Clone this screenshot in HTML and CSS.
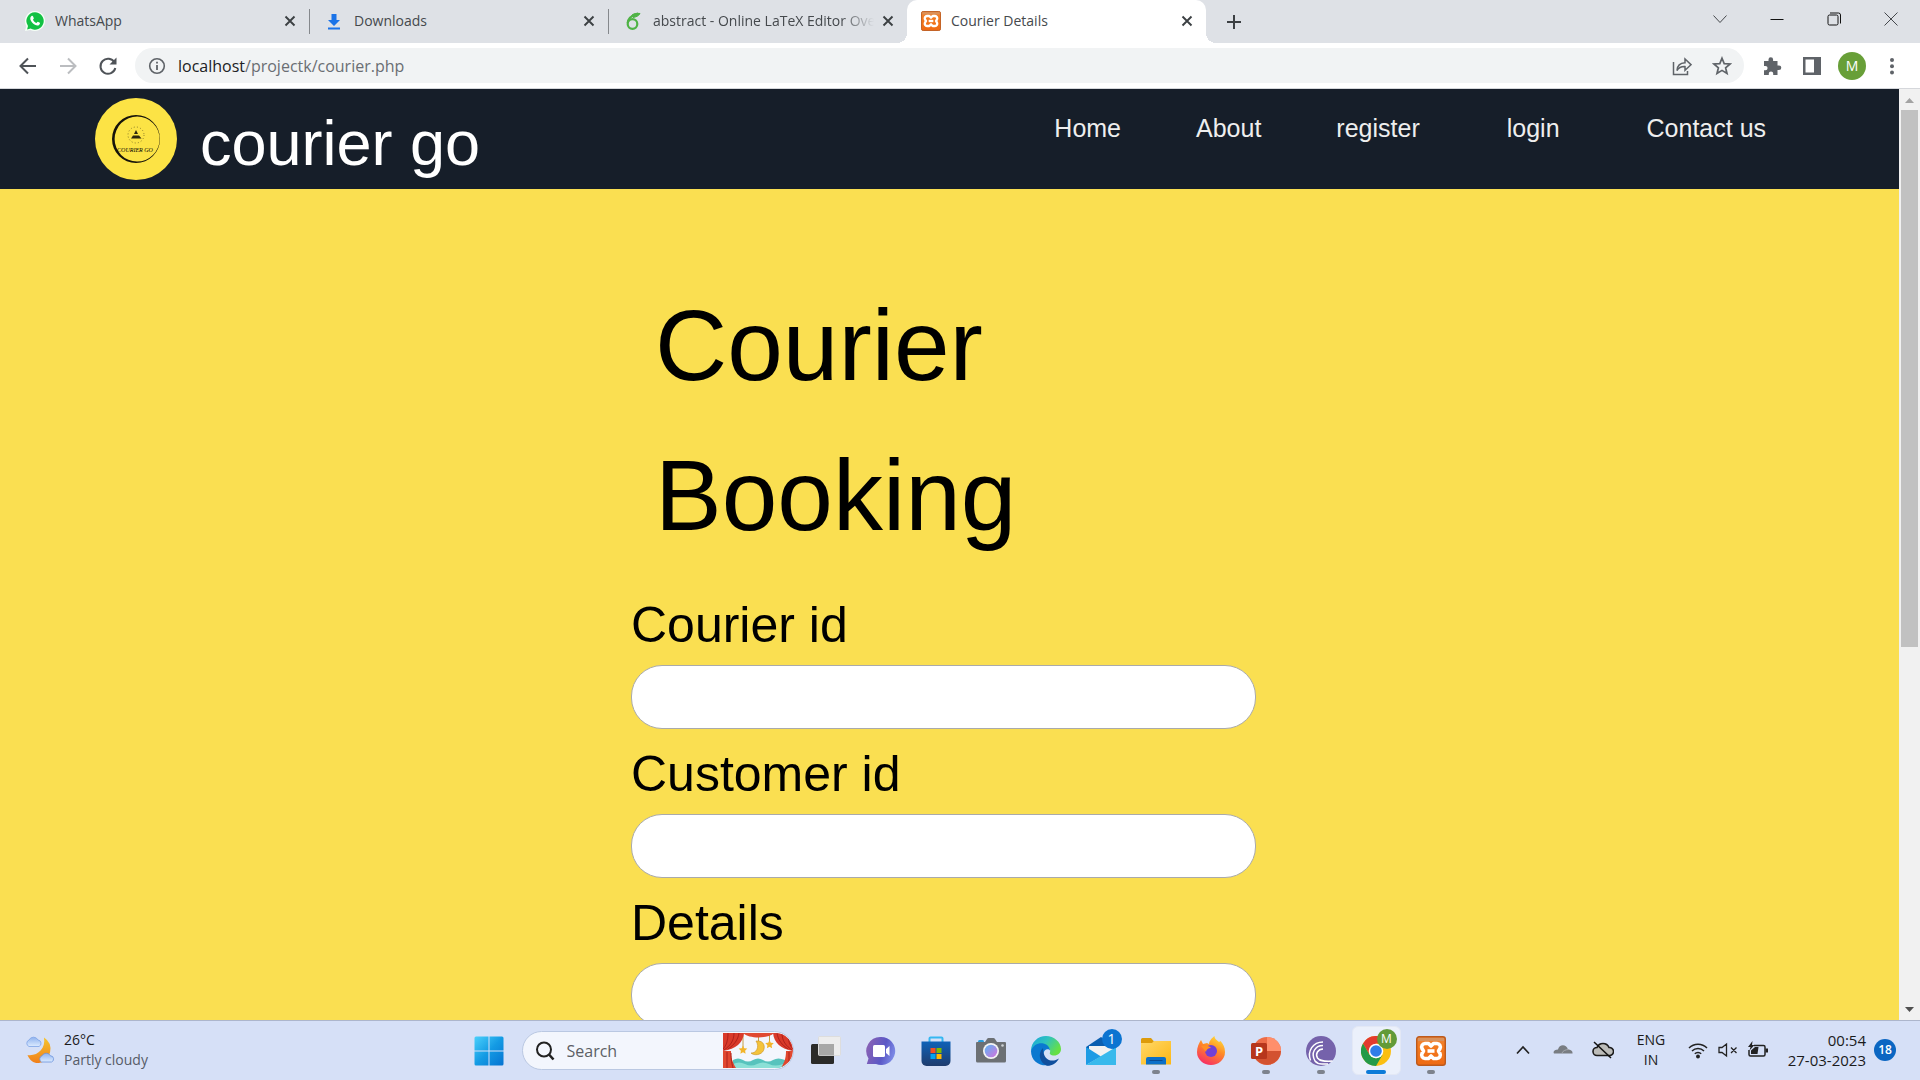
FILE: index.html
```html
<!DOCTYPE html>
<html lang="en">
<head>
<meta charset="utf-8">
<meta name="viewport" content="width=device-width, initial-scale=1">
<title>Courier Details</title>
<link rel="stylesheet" href="styles.css">
</head>
<body>
<svg class="defs" aria-hidden="true">
  <defs>
    <linearGradient id="orange" x1="0" y1="0" x2="0" y2="1"><stop offset="0" stop-color="#e9863f"/><stop offset=".3" stop-color="#f47b20"/><stop offset="1" stop-color="#ee6a14"/></linearGradient>
    <symbol id="xampp" viewBox="0 0 30 30">
      <rect x=".7" y=".7" width="28.6" height="28.6" rx="2.5" fill="url(#orange)" stroke="#bd5a1c" stroke-width="1.4"/>
      <path d="M2 2h26v3H2z" fill="#d9925c"/>
      <path d="M9 7.5h3.5L15 10l2.500-2.500H21a3.500 3.500 0 0 1 3 5l-1.500 2.500 1.500 2.500a3.500 3.500 0 0 1-3 5h-3.500L15 20l-2.500 2.500H9a3.500 3.500 0 0 1-3-5L7.500 15 6 12.500a3.500 3.500 0 0 1 3-5z" fill="none" stroke="#fff" stroke-width="3.600" stroke-linejoin="round"/>
      <path d="M11.500 15h7" stroke="#fff" stroke-width="3.600"/>
    </symbol>
    <symbol id="close" viewBox="0 0 12 12"><path d="M1.500 1.500l9 9M10.500 1.500l-9 9" stroke="#3c4043" stroke-width="1.900"/></symbol>
  </defs>
</svg>

<header class="browser">
  <div class="tabstrip">
    <nav class="tabs" aria-label="Tabs">
      <div class="tab">
        <svg class="favicon" viewBox="0 0 20 20"><path d="M10 0a10 10 0 1 1-4.500 18.900L0 20l1.300-5A10 10 0 0 1 10 0z" fill="#f5fff6"/><path d="M10 1.300a8.700 8.700 0 1 1-4.400 16.200l-3.500.9.900-3.400A8.700 8.700 0 0 1 10 1.300z" fill="#12c143"/><path d="M6.300 5.300c.7-.7 1.500-.5 1.800.2l.7 1.700c.1.500-.8 1.200-.8 1.500.6 1.500 2 2.700 3.400 3.200.5 0 1-1.200 1.500-1.100l1.900 1c.6.500-.1 2.200-1.400 2.600-3.200 1-8.500-3.900-8.100-7.300.1-.7.500-1.400 1-1.800z" fill="#fff"/></svg>
        <span class="tab-title">WhatsApp</span>
        <button class="tab-close" aria-label="Close WhatsApp"><svg width="12" height="12"><use href="#close"/></svg></button>
      </div>
      <div class="tab tab-divided">
        <svg class="favicon" viewBox="0 0 20 20"><path d="M7.500 3h5v6H16l-6 6-6-6h3.500zM4 16.500h12v2H4z" fill="#1a73e8"/></svg>
        <span class="tab-title">Downloads</span>
        <button class="tab-close" aria-label="Close Downloads"><svg width="12" height="12"><use href="#close"/></svg></button>
      </div>
      <div class="tab tab-divided">
        <svg class="favicon" viewBox="0 0 20 20" fill="none" stroke="#4fb345"><circle cx="9.500" cy="13" r="4.800" stroke-width="2.200"/><path d="M4.700 12C5 7.500 8 4.500 15 2.500" stroke-width="2.200"/><path d="M8.500 4.500c2-2 5-2.500 8.500-2-1.200 2.500-4 3.500-7 4" stroke-width="1" fill="#4fb345"/></svg>
        <span class="tab-title tab-fade">abstract - Online LaTeX Editor Overleaf</span>
        <button class="tab-close" aria-label="Close abstract"><svg width="12" height="12"><use href="#close"/></svg></button>
      </div>
      <div class="tab tab-active">
        <svg class="favicon"><use href="#xampp"/></svg>
        <span class="tab-title">Courier Details</span>
        <button class="tab-close" aria-label="Close Courier Details"><svg width="12" height="12"><use href="#close"/></svg></button>
      </div>
      <button class="new-tab" aria-label="New tab"><svg width="16" height="16" viewBox="0 0 16 16"><path d="M8 1v14M1 8h14" stroke="#3c4043" stroke-width="2"/></svg></button>
    </nav>
    <div class="window-buttons">
      <button aria-label="Search tabs"><svg width="14" height="14" viewBox="0 0 14 14"><path d="M.5 3.500L7 10.500l6.500-7"/></svg></button>
      <button aria-label="Minimize"><svg width="14" height="14" viewBox="0 0 14 14"><path d="M.5 7.500h13" stroke="#111"/></svg></button>
      <button aria-label="Restore"><svg width="14" height="14" viewBox="0 0 14 14"><rect x="1" y="3" width="10" height="10" rx="1.500" stroke="#111"/><path d="M3 1h8.500a2 2 0 0 1 2 2v8.500" stroke="#111"/></svg></button>
      <button aria-label="Close window"><svg width="14" height="14" viewBox="0 0 14 14"><path d="M.5.5l13 13M13.500.5l-13 13"/></svg></button>
    </div>
  </div>

  <div class="toolbar">
    <div class="nav-buttons">
      <button aria-label="Back"><svg width="20" height="20" viewBox="0 0 20 20"><path d="M18 10H3M10 2.500L2.500 10l7.500 7.500"/></svg></button>
      <button aria-label="Forward" disabled><svg width="20" height="20" viewBox="0 0 20 20"><path d="M2 10h15M10 2.500l7.500 7.500-7.500 7.500"/></svg></button>
      <button aria-label="Reload"><svg width="20" height="20" viewBox="0 0 20 20"><path d="M16.500 6.500A7.500 7.500 0 1 0 17.300 12"/><path d="M18.500 1.500v7h-7z" fill="#4f5358" stroke="none"/></svg></button>
    </div>
    <div class="omnibox">
      <svg width="18" height="18" viewBox="0 0 18 18"><circle cx="9" cy="9" r="7.300" fill="none" stroke="#5f6368" stroke-width="1.600"/><path d="M9 8v5M9 4.800v1.800" stroke="#5f6368" stroke-width="1.800"/></svg>
      <div class="url" role="textbox" aria-label="Address" contenteditable="true" spellcheck="false"><span class="url-host">localhost</span>/projectk/courier.php</div>
      <button aria-label="Share"><svg width="20" height="20" viewBox="0 0 20 20" fill="none" stroke="#5f6368" stroke-width="1.500"><path d="M1.500 6v12.500h14V15M5 14.500c.3-5 3-7.500 8-7.700V3l6 5.700-6 5.500v-3.600c-4-.2-6.300 1-8 3.900z"/></svg></button>
      <button aria-label="Bookmark this page"><svg width="20" height="20" viewBox="0 0 20 20"><path d="M10 2.200l2.200 5.400 5.900.4-4.500 3.800 1.400 5.700-5-3.100-5 3.100 1.400-5.700L1.900 8l5.900-.4z" fill="none" stroke="#5f6368" stroke-width="1.700"/></svg></button>
    </div>
    <div class="toolbar-actions">
      <button aria-label="Extensions"><svg width="20" height="20" viewBox="0 0 20 20"><path d="M2 5h4.500V3.500a2.300 2.300 0 0 1 4.600 0V5H15.500v4.500H17a2.300 2.300 0 0 1 0 4.600h-1.500V19h-4.300v-1.400a2.200 2.200 0 0 0-4.400 0V19H2v-4.700h1.400a2.200 2.200 0 0 0 0-4.400H2z" fill="#5f6368"/></svg></button>
      <button aria-label="Side panel"><svg width="20" height="20" viewBox="0 0 20 20"><path d="M1 1h18v18H1zM3.500 3.500v13h8.500v-13z" fill="#5f6368" fill-rule="evenodd"/></svg></button>
      <button class="profile" aria-label="Profile">M</button>
      <button aria-label="Menu"><svg width="20" height="20" viewBox="0 0 20 20" fill="#5f6368"><circle cx="10" cy="4" r="2"/><circle cx="10" cy="10.200" r="2"/><circle cx="10" cy="16.400" r="2"/></svg></button>
    </div>
  </div>
</header>

<div class="viewport">
  <div class="site">
    <header class="site-header">
      <a class="brand" href="#">
        <svg class="brand-logo" viewBox="0 0 82 82">
          <circle cx="41" cy="41" r="41" fill="#fce345"/>
          <path d="M41 17a24 24 0 1 0 24 24A24 24 0 0 0 41 17zm1.200 1.600A22.500 22.500 0 1 1 42 63.600 22.500 22.500 0 0 1 42.200 18.600z" fill="#16130a" fill-rule="evenodd"/>
          <circle cx="41" cy="37" r="8" fill="none" stroke="#8a7b2a" stroke-dasharray="1 2.200"/>
          <path d="M36 40.500l2-3h6l2.500 3zM39 36l2-4 2 4z" fill="#2d270d"/>
          <text x="40" y="54" text-anchor="middle" class="brand-logo-text">COURIER GO</text>
        </svg>
        <span>courier go</span>
      </a>
      <nav class="site-nav" aria-label="Main">
        <a href="#">Home</a>
        <a href="#">About</a>
        <a href="#">register</a>
        <a href="#" class="nav-login">login</a>
        <a href="#">Contact us</a>
      </nav>
    </header>
    <main class="booking">
      <form class="booking-form">
        <h1>Courier Booking</h1>
        <div class="field"><label for="courier-id">Courier id</label><input id="courier-id" type="text"></div>
        <div class="field"><label for="customer-id">Customer id</label><input id="customer-id" type="text"></div>
        <div class="field"><label for="details">Details</label><input id="details" type="text"></div>
      </form>
    </main>
  </div>
  <div class="scrollbar" aria-hidden="true">
    <svg width="20" height="21" viewBox="0 0 20 21"><path d="M6 14l4.500-5 4.500 5z" fill="#a3a3a3"/></svg>
    <div class="scroll-track"><div class="scroll-thumb"></div></div>
    <svg width="20" height="21" viewBox="0 0 20 21"><path d="M6 8h9l-4.500 5z" fill="#505050"/></svg>
  </div>
</div>

<footer class="taskbar">
  <button class="weather">
    <svg width="30" height="30" viewBox="0 0 30 30">
      <defs><linearGradient id="moon" x1="0" y1="0" x2="0" y2="1"><stop offset="0" stop-color="#f6c52d"/><stop offset="1" stop-color="#f07f1b"/></linearGradient><linearGradient id="cloud" x1="0" y1="0" x2="0" y2="1"><stop offset="0" stop-color="#8fb2ee"/><stop offset="1" stop-color="#dcebff"/></linearGradient></defs>
      <path d="M19 2.500a14 14 0 0 1-5 25.500C9 28.500 5 26 2.500 20 12 21.500 21 14 19 2.500z" fill="url(#moon)"/>
      <path d="M4 11.500a3.500 3.500 0 0 1 0-6.500 5 5 0 0 1 9 0 3.400 3.400 0 0 1 1 6.500z" fill="url(#cloud)" stroke="#7ea3e6" stroke-width=".8"/>
      <path d="M16.500 27a3.400 3.400 0 0 1 .5-6.200 4.800 4.800 0 0 1 8.500 0 3.200 3.200 0 0 1 1 6.200z" fill="url(#cloud)" stroke="#6b93dc" stroke-width=".8"/>
    </svg>
    <span class="weather-text"><span>26°C</span><span class="muted">Partly cloudy</span></span>
  </button>

  <div class="task-center">
    <button class="task" aria-label="Start"><svg viewBox="0 0 30 30"><defs><linearGradient id="win" x1="0" y1="0" x2="1" y2="1"><stop offset="0" stop-color="#4bd0fb"/><stop offset=".5" stop-color="#149be4"/><stop offset="1" stop-color="#0573d1"/></linearGradient></defs><path d="M2 .5h12.500v14H.5V2A1.500 1.500 0 0 1 2 .5zM15.500.5H28A1.500 1.500 0 0 1 29.500 2v12.500h-14zM.5 15.500h14v14H2A1.500 1.500 0 0 1 .5 28zM15.500 15.500h14V28a1.500 1.500 0 0 1-1.500 1.500H15.500z" fill="url(#win)"/></svg></button>
    <div class="search">
      <svg width="20" height="20" viewBox="0 0 20 20" fill="none" stroke="#222"><circle cx="9" cy="8.500" r="7" stroke-width="2"/><path d="M14 13.500l4.500 5" stroke-width="2.600"/></svg>
      <input type="search" placeholder="Search" aria-label="Search">
      <svg class="search-art" viewBox="0 0 70 35">
        <path d="M10 27q5-3 10 0t10 0 10 0 10 0 12 0v8H10z" fill="#57c3bd"/><path d="M10 31q6-3 12 0t12 0 12 0 14 0v4H10z" fill="#8be0d6"/>
        <path d="M20 0v14M35.500 0v8M46.500 0v9" stroke="#b98b1b" stroke-width=".8"/>
        <path d="M35 8c5.500 0 7.500 5 5.500 9.500S31 23 28 20c5 .5 9-6 5-12z" fill="#f4c33b" stroke="#c9911f" stroke-width=".6"/>
        <path d="M20 12.500l1.300 2.700 3 .4-2.200 2.100.5 3-2.600-1.400-2.600 1.400.5-3-2.200-2.100 3-.4zM46.500 7l1.300 2.700 3 .4-2.200 2.100.5 3-2.600-1.400-2.600 1.400.5-3-2.200-2.100 3-.4z" fill="#f2b52c"/>
        <path d="M0 0h21c-1 10-8 16-21 18zM70 0H50c1 10 8 16 20 18z" fill="#d93a2a"/>
        <path d="M20 0h31c-6 6-25 6-31 0z" fill="#e04a32"/>
        <path d="M0 18h8c0 8 2 12 5 17H0zM70 18h-7c0 8-2 12-5 17h12z" fill="#e0472f"/>
        <path d="M5 0c0 8-2 13-5 16M11 0c0 8-4 13-10 17M16 0c-1 7-5 12-11 16M65 0c0 8 2 13 5 16M59 0c0 8 4 13 10 17M54 0c1 7 5 12 11 16M4 19v16M8 20c0 7 1 11 2 15M66 19v16" fill="none" stroke="#a91e1a" stroke-width=".9"/>
      </svg>
    </div>
    <button class="task" aria-label="Task view"><svg viewBox="0 0 30 30"><rect y="8" width="23" height="20" rx="1.500" fill="#2b2b29"/><rect x="7.500" y=".5" width="22" height="19" rx="1" fill="#ededed" stroke="#ddd"/><path d="M8 8h15v11.500H8z" fill="#a8a8a7"/></svg></button>
    <button class="task" aria-label="Chat"><svg viewBox="0 0 30 30"><defs><linearGradient id="chat" x1="0" y1=".3" x2="1" y2=".6"><stop offset="0" stop-color="#8a62b4"/><stop offset=".6" stop-color="#5b58c6"/><stop offset="1" stop-color="#7e8de8"/></linearGradient></defs><path d="M15 1a14 14 0 1 1-5 27H.8l1.700-5.500A14 14 0 0 1 15 1z" fill="url(#chat)"/><rect x="7" y="9" width="12" height="12" rx="1.500" fill="#fff"/><path d="M20 13l3.500-3v10L20 17z" fill="#fff"/></svg></button>
    <button class="task" aria-label="Microsoft Store"><svg viewBox="0 0 30 30"><defs><linearGradient id="store" x1="0" y1="0" x2="0" y2="1"><stop offset="0" stop-color="#0f62b8"/><stop offset="1" stop-color="#1f3c6d"/></linearGradient></defs><path d="M8.500 7V2.500a1 1 0 0 1 1-1h11a1 1 0 0 1 1 1V7" fill="none" stroke="#35b7f1" stroke-width="2"/><path d="M.5 5.500h29V25a5 5 0 0 1-5 5h-19a5 5 0 0 1-5-5z" fill="url(#store)"/><path d="M9.500 12h5v5h-5z" fill="#f25022"/><path d="M15.500 12h5v5h-5z" fill="#7fba00"/><path d="M9.500 18h5v5h-5z" fill="#00a4ef"/><path d="M15.500 18h5v5h-5z" fill="#ffb900"/></svg></button>
    <button class="task" aria-label="Camera"><svg viewBox="0 0 30 30"><defs><linearGradient id="lens" x1="0" y1="0" x2="1" y2="1"><stop offset="0" stop-color="#5bb5f5"/><stop offset="1" stop-color="#d573dc"/></linearGradient></defs><path d="M2 7V5.500A1.500 1.500 0 0 1 3.500 4h3A1.500 1.500 0 0 1 8 5.500V7z" fill="#2a9cdc"/><path d="M0 7a1 1 0 0 1 1-1h8l2-3a2 2 0 0 1 1.500-1h5A2 2 0 0 1 19 3l2 3h8a1 1 0 0 1 1 1v18a1.500 1.500 0 0 1-1.500 1.500h-27A1.500 1.500 0 0 1 0 25z" fill="#6c7074"/><circle cx="15" cy="15" r="8" fill="#f4f4f4"/><circle cx="15" cy="15" r="6.300" fill="url(#lens)"/><circle cx="26.500" cy="9.500" r="1.300" fill="#cfd3d6"/></svg></button>
    <button class="task" aria-label="Edge"><svg viewBox="0 0 30 30"><defs><linearGradient id="edgetop" x1="0" y1="0" x2="1" y2=".5"><stop offset="0" stop-color="#17a4dc"/><stop offset=".5" stop-color="#2fc2bf"/><stop offset="1" stop-color="#66e045"/></linearGradient></defs><path d="M0 15C0 6 7 0 15 0s15 6 15 13c0 4-3 6.500-7 6.500-3 0-5-1.500-4-3C21 10 10 6 0 15z" fill="url(#edgetop)"/><path d="M0 15C2 8.500 8 6.500 12.500 7.500c4 1 6.500 4 6.500 7-1.500-2.500-6.500-1.500-6.500 3.500 0 6 6 9.500 12 8C16 33 0 29 0 15z" fill="#0b78d0"/><path d="M12 12c-6 6-3 15 4 17.800 5 .2 9-2.300 12-7.300-6 4-16 3-16-10.500z" fill="#104f9d"/></svg></button>
    <button class="task" aria-label="Mail, 1 new"><svg viewBox="0 0 30 30"><path d="M0 11L15 1l15 10v8H0z" fill="#0b5fb0"/><path d="M3 10h24v9L15 22 3 16z" fill="#f2f2f2"/><path d="M0 11l15 9.500L0 29z" fill="#1d9be4"/><path d="M30 11L0 29h30z" fill="#38b9ec"/></svg><span class="badge">1</span></button>
    <button class="task task-running" aria-label="File Explorer"><svg viewBox="0 0 30 30"><defs><linearGradient id="folder" x1="0" y1="0" x2="1" y2="1"><stop offset="0" stop-color="#ffd869"/><stop offset="1" stop-color="#fdb713"/></linearGradient></defs><path d="M0 3.500A1.500 1.500 0 0 1 1.500 2H10l3 3.500V9H0z" fill="#dd9b0b"/><path d="M0 7h11l2-2h17v23.500H0z" fill="url(#folder)"/><path d="M5 28.500V23a2 2 0 0 1 2-2h16a2 2 0 0 1 2 2v5.500z" fill="#0c70c8"/><path d="M8.500 24.500h13" stroke="#0a4b92"/></svg></button>
    <button class="task" aria-label="Firefox"><svg viewBox="0 0 30 30"><defs><linearGradient id="fox" x1=".8" y1="0" x2=".3" y2="1"><stop offset="0" stop-color="#ffe23b"/><stop offset=".45" stop-color="#ff8a26"/><stop offset="1" stop-color="#f72c66"/></linearGradient></defs><path d="M1 16C1 11 3 7 5 4l2 4 4-1 2 1c0-3 3-6 5.500-8 0 3 2.500 4 4.500 6l1.500-1C27 8 29 11 29 16a14 13 0 0 1-28 0z" fill="url(#fox)"/><circle cx="15" cy="15" r="6" fill="#7140d6"/><path d="M5 10c4-1.500 9 0 10 2-3 0-5 2-5 4" fill="#ff8f25"/></svg></button>
    <button class="task task-running" aria-label="PowerPoint"><svg viewBox="0 0 30 30"><circle cx="16" cy="15" r="14" fill="#ed6c47"/><path d="M16 1a14 14 0 0 1 14 14H16z" fill="#ff8f6b"/><path d="M30 15a14 14 0 0 1-27 5l13-5z" fill="#d35230"/><rect y="7" width="16" height="16" rx="1.500" fill="#b7361c"/><text x="8" y="19.500" text-anchor="middle" class="ppt-letter">P</text></svg></button>
    <button class="task task-running" aria-label="BitTorrent"><svg viewBox="0 0 30 30"><circle cx="15" cy="15" r="15" fill="#7562ab"/><g fill="none" stroke="#fff" stroke-width="1.500"><path d="M17 6C7 6 1 15 4.500 24.500"/><path d="M17 9.500C9 9.500 4.500 17 9 25q2.500 3 7 3h6"/><path d="M17 13c-5 0-8 5-5.500 9 2.500 3.500 7.500 3.500 15 3"/></g></svg></button>
    <button class="task task-running task-active" aria-label="Chrome"><svg viewBox="0 0 30 30"><circle cx="15" cy="15" r="15" fill="#fbbf12"/><path d="M2 7.500A15 15 0 0 1 28 7.500H15L8.500 18.800z" fill="#e33b2e"/><path d="M2 7.500l6.500 11.300L15 22.500l6.500-3.700L15 30A15 15 0 0 1 2 7.500z" fill="#249a48"/><circle cx="15" cy="15" r="7.300" fill="#fff"/><circle cx="15" cy="15" r="5.800" fill="#2f7de9"/></svg><span class="badge badge-green">M</span></button>
    <button class="task task-running" aria-label="XAMPP"><svg><use href="#xampp"/></svg></button>
  </div>

  <div class="tray">
    <button aria-label="Show hidden icons"><svg width="14" height="10" viewBox="0 0 14 10"><path d="M1 8.500l6-6.500 6 6.500" fill="none" stroke="#222" stroke-width="1.700"/></svg></button>
    <button aria-label="OneDrive"><svg width="20" height="20" viewBox="0 0 20 20"><path d="M1 13.500c-1.500-2 1-4 4-4 1-5 8-6 10 0 3 0 5 2 4.500 4z" fill="#797d82"/><path d="M9 13c1-2.500 4-3.500 7-3.500" stroke="#a5a8ad" fill="none"/></svg></button>
    <button aria-label="Sync paused"><svg width="22" height="20" viewBox="0 0 22 20"><path d="M5 15.500a4 4 0 0 1 0-8 6.500 6.500 0 0 1 12 0 4 4 0 0 1 1 8z" fill="#bcbcb9" stroke="#1a1a1a" stroke-width="1.600"/><path d="M2 2l17 16" stroke="#111" stroke-width="1.500"/></svg></button>
    <button class="language"><span>ENG</span><span>IN</span></button>
    <button class="status" aria-label="Network, sound and battery">
      <svg width="20" height="18" viewBox="0 0 20 18" fill="none" stroke="#222" stroke-width="1.500"><path d="M1 7a12.500 12.500 0 0 1 18 0M4 10a8.500 8.500 0 0 1 12 0M6.800 12.800a4.500 4.500 0 0 1 6.400 0"/><circle cx="10" cy="15.500" r="1.200" fill="#222"/></svg>
      <svg width="20" height="18" viewBox="0 0 20 18" fill="none" stroke="#222" stroke-width="1.300"><path d="M1 6.500h3L8.500 3v12L4 11.500H1zM13 6.500l5.500 5.500M18.500 6.500L13 12"/></svg>
      <svg width="20" height="18" viewBox="0 0 20 18"><path d="M6 4.500h9.500A1.500 1.500 0 0 1 17 6v7.500a1.500 1.500 0 0 1-1.500 1.500h-13A1.500 1.500 0 0 1 1 13.500V9" fill="none" stroke="#222" stroke-width="1.500"/><path d="M17.500 7.500H20v4h-2.500zM3 13V9.500L7 6h3.500L9.500 13zM4.500 0L0 6h2.500L1.500 9.500 6.500 4H4z" fill="#222"/></svg>
    </button>
    <button class="clock"><span>00:54</span><span>27-03-2023</span></button>
    <span class="notices">18</span>
  </div>
</footer>
</body>
</html>
```
FILE: styles.css
```css
* { box-sizing: border-box; }

html, body { height: 100%; }

body {
  margin: 0;
  display: flex;
  flex-direction: column;
  overflow: hidden;
  font-family: "Open Sans", "Noto Sans", sans-serif;
  font-size: 14px;
  color: #1b1b1b;
}

button {
  display: flex;
  align-items: center;
  justify-content: center;
  padding: 0;
  border: 0;
  background: none;
  font: inherit;
  color: inherit;
}

svg { display: block; flex: none; }

.defs { position: absolute; width: 0; height: 0; }

/* Browser window */
.browser { flex: none; }

.tabstrip {
  display: flex;
  justify-content: space-between;
  height: 43px;
  background: #dee1e6;
}

.tabs { display: flex; padding-left: 10px; }

.tab {
  display: flex;
  align-items: center;
  width: 299px;
  padding: 0 13px 2px 15px;
  color: #45494d;
}

.tab-divided {
  background: linear-gradient(#85888c, #85888c) no-repeat 0 9px / 1px 25px;
}

.tab-active {
  position: relative;
  padding-left: 14px;
  background: #fff;
  border-radius: 10px 10px 0 0;
}

.tab-active::before,
.tab-active::after {
  content: "";
  position: absolute;
  bottom: 0;
  width: 10px;
  height: 10px;
}

.tab-active::before { left: -10px; background: radial-gradient(circle at 0 0, transparent 10px, #fff 10px); }
.tab-active::after { right: -10px; background: radial-gradient(circle at 100% 0, transparent 10px, #fff 10px); }

.favicon { width: 20px; height: 20px; }

.tab-title {
  flex: 1;
  margin: 0 8px 0 10px;
  overflow: hidden;
  white-space: nowrap;
}

.tab-fade { mask-image: linear-gradient(90deg, #000 85%, transparent); }

.tab-close { width: 12px; height: 20px; }

.new-tab { width: 36px; margin-left: 10px; }

.window-buttons { display: flex; height: 37px; padding-right: 1px; }
.window-buttons button { width: 57px; }
.window-buttons svg { fill: none; stroke: #45484c; stroke-width: 1; }

.toolbar {
  display: flex;
  align-items: center;
  height: 46px;
  background: #fff;
  border-bottom: 1px solid #d5d7db;
}

.nav-buttons { display: flex; padding: 0 7px 0 8px; }
.nav-buttons button { width: 40px; height: 36px; }
.nav-buttons svg { fill: none; stroke: #4f5358; stroke-width: 2; }
.nav-buttons button:disabled svg { stroke: #bbbdc0; }

.omnibox {
  flex: 1;
  display: flex;
  align-items: center;
  gap: 20px;
  height: 35px;
  padding: 0 12px 0 13px;
  border-radius: 18px;
  background: #f1f3f4;
}

.url {
  flex: 1;
  margin-left: -8px;
  font-size: 16px;
  line-height: 24px;
  color: #6a6e73;
}

.url-host { color: #202124; }

.toolbar-actions { display: flex; align-items: center; padding: 0 8px; }
.toolbar-actions button { width: 40px; }

.toolbar-actions .profile {
  width: 28px;
  height: 28px;
  margin: 0 6px;
  border-radius: 50%;
  background: #689f38;
  color: #fff;
}

/* Site */
.viewport {
  flex: 1;
  display: flex;
  min-height: 0;
  overflow: hidden;
}

.site {
  flex: 1;
  background: #fadf51;
  font-family: "Liberation Sans", Arial, sans-serif;
  color: #000;
}

.site-header {
  display: flex;
  justify-content: space-between;
  min-height: 100px;
  padding: 0 7% 0 5%;
  background: #161e29;
}

.brand {
  display: flex;
  align-items: center;
  gap: 23px;
  font-size: 63px;
  line-height: 90px;
  color: #fff;
  text-decoration: none;
}

.brand span { padding-top: 8px; }
.brand-logo { width: 82px; height: 82px; }
.brand-logo-text { font: italic 6px "Liberation Serif", serif; }

.site-nav {
  display: flex;
  gap: 75px;
  padding-top: 24px;
}

.site-nav a {
  font-size: 25px;
  line-height: 30px;
  color: #eee;
  text-decoration: none;
}

.site-nav .nav-login { padding: 0 12px; }

.booking {
  display: flex;
  justify-content: center;
  padding: 81px 12px 0 0;
}

.booking-form { width: 625px; }

h1 {
  margin: 0 0 18px;
  padding-left: 24px;
  font-size: 100px;
  font-weight: 400;
  line-height: 150px;
}

.field { margin-bottom: 8px; }

.field label {
  display: block;
  margin-bottom: 2px;
  font-size: 50px;
  line-height: 75px;
}

.field input {
  display: block;
  width: 100%;
  height: 64px;
  padding: 0 24px;
  border: 1px solid #aaa;
  border-radius: 31px;
  background: #fff;
  font: inherit;
  font-size: 25px;
}

.scrollbar {
  display: flex;
  flex-direction: column;
  width: 21px;
  background: #f1f1f1;
}

.scroll-track { flex: 1; padding: 0 2px; }
.scroll-thumb { height: 60.4%; background: #c1c1c1; }

/* Taskbar */
.taskbar {
  flex: none;
  display: grid;
  grid-template-columns: 1fr auto 1fr;
  height: 60px;
  border-top: 1px solid #adb6cc;
  background: #d6e0f7;
}

.weather {
  justify-content: flex-start;
  gap: 9px;
  padding: 0 0 2px 25px;
  text-align: left;
}

.weather-text { display: flex; flex-direction: column; line-height: 20px; }
.muted { color: #565c68; }

.task-center { display: flex; align-items: center; }

.task {
  position: relative;
  width: 55px;
  height: 59px;
}

.task svg { width: 30px; height: 30px; position: relative; }

.task-running::after {
  content: "";
  position: absolute;
  bottom: 6px;
  width: 8px;
  height: 4px;
  border-radius: 2px;
  background: #7d828d;
}

.task-active::after { width: 20px; background: #0d7bd8; }

.task-active::before {
  content: "";
  position: absolute;
  inset: 5px 3px;
  border: 1px solid #e3e8f5;
  border-radius: 6px;
  background: #ebf0fb;
}

.badge {
  position: absolute;
  top: 8px;
  right: 7px;
  width: 20px;
  height: 20px;
  border-radius: 50%;
  background: #0c74d1;
  color: #fff;
  line-height: 20px;
}

.badge-green { background: #639b38; font-size: 12px; }

.ppt-letter { font: bold 13px "Open Sans", sans-serif; fill: #fff; }

.search {
  display: flex;
  align-items: center;
  width: 272px;
  height: 39px;
  margin: 0 5px;
  padding-left: 12px;
  border: 1px solid #bac8e2;
  border-radius: 20px;
  background: #f3f6fd;
  overflow: hidden;
}

.search input {
  flex: 1;
  min-width: 0;
  margin-left: 12px;
  padding: 0;
  border: 0;
  background: none;
  font: inherit;
  font-size: 16px;
  outline: 0;
}

.search input::placeholder { color: #5c5f66; }

.search-art {
  width: 70px;
  height: 35px;
  border-radius: 0 18px 18px 0;
}

.tray {
  display: flex;
  align-items: center;
  justify-content: flex-end;
  padding: 0 24px 2px 0;
}

.tray > button { min-width: 40px; height: 48px; }

.tray .language,
.tray .clock {
  flex-direction: column;
  line-height: 20px;
}

.tray .language { width: 56px; }
.tray .status { gap: 10px; padding: 0 9px; }
.tray .clock { align-items: flex-end; width: 89px; font-size: 15px; }

.notices {
  width: 22px;
  height: 22px;
  margin-left: 8px;
  border-radius: 50%;
  background: #0b66c2;
  color: #fff;
  font-size: 12px;
  font-weight: 600;
  line-height: 22px;
  text-align: center;
}
```
